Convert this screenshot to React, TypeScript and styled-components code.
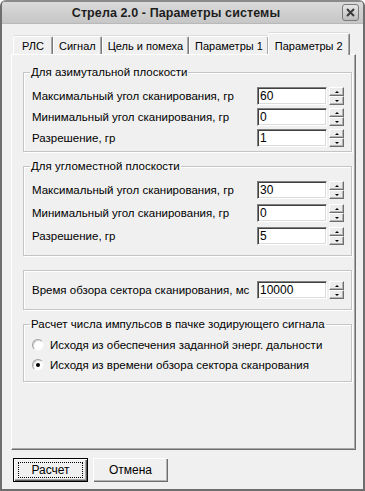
import React from 'react';
import styled, { createGlobalStyle } from 'styled-components';

const GlobalStyle = createGlobalStyle`
  html, body {
    margin: 0;
    padding: 0;
    background: #ffffff;
  }
  * {
    box-sizing: border-box;
  }
`;

// Window frame
const Window = styled.div`
  width: 365px;
  height: 491px;
  display: flex;
  flex-direction: column;
  background: #f0f0f0;
  border: 2px solid #6e6e6e;
  border-top: none;
  border-radius: 6px 6px 0 0;
  font-family: 'Liberation Sans', Arial, sans-serif;
  font-size: 11px;
  color: #000;
  overflow: hidden;
`;

const TitleBar = styled.div`
  height: 24px;
  display: flex;
  align-items: center;
  padding: 0 4px 0 6px;
  background: linear-gradient(#dadada, #c6c6c6);
  border-top: 2px solid #8a8a8a;
  border-bottom: 1px solid #b8b8b8;
`;

const Title = styled.div`
  flex: 1;
  text-align: center;
  font-size: 12.5px;
  font-weight: bold;
  color: #1e1e1e;
  letter-spacing: 0.1px;
  padding-left: 2px;
`;

const CloseButton = styled.div`
  width: 17px;
  height: 17px;
  border: 1px solid #7a7a7a;
  border-radius: 3px;
  background: linear-gradient(#e6e6e6, #bdbdbd);
  display: flex;
  align-items: center;
  justify-content: center;
`;

const Body = styled.div`
  flex: 1;
  display: flex;
  flex-direction: column;
  padding: 9px 7px 7px 9px;
`;

// Tabs
const TabStrip = styled.div`
  display: flex;
  align-items: flex-end;
  height: 22px;
  padding-left: 2px;
  position: relative;
  z-index: 1;
`;

const Tab = styled.div<{ $active?: boolean }>`
  height: ${({ $active }) => ($active ? '22px' : '18px')};
  min-width: 40px;
  padding: ${({ $active }) => ($active ? '2px 6px 0 6px' : '1px 5px 0 5px')};
  margin: ${({ $active }) => ($active ? '0 -2px 0 -1px' : '0 0 1px 0')};
  display: flex;
  align-items: center;
  justify-content: center;
  background: #f0f0f0;
  border-top: 1px solid #ffffff;
  border-left: 1px solid #ffffff;
  border-right: 1px solid #7a7a7a;
  box-shadow: inset -1px 0 #a8a8a8, 0 -1px 0 #dcdcdc;
  border-radius: 2px 2px 0 0;
  white-space: nowrap;
  position: relative;
  z-index: ${({ $active }) => ($active ? 2 : 1)};
  font-size: 11px;
`;

const Panel = styled.div`
  flex: 1;
  margin-top: -1px;
  display: flex;
  flex-direction: column;
  padding: 11px 3px 0 11px;
  background: #f0f0f0;
  border-top: 1px solid #ffffff;
  border-left: 1px solid #ffffff;
  border-right: 1px solid #6e6e6e;
  border-bottom: 1px solid #6e6e6e;
  box-shadow: inset -1px -1px #a8a8a8;
`;

// Group boxes
const Group = styled.fieldset<{ $gap: number; $pad: string; $top?: number }>`
  margin: ${({ $top }) => $top ?? 0}px 0 0 0;
  padding: ${({ $pad }) => $pad};
  border: 1px solid #c4c4c4;
  box-shadow: inset 1px 1px #ffffff, 1px 1px #ffffff;
  min-inline-size: 0;
  display: flex;
  flex-direction: column;
  gap: ${({ $gap }) => $gap}px;
`;

const Legend = styled.legend`
  padding: 0 1px;
  margin-left: -2px;
  line-height: 13px;
  font-size: 11.5px;
`;

const FieldRow = styled.div`
  display: grid;
  grid-template-columns: 1fr 70px 15px;
  column-gap: 2px;
  align-items: center;
  height: 18px;
`;

const FieldLabel = styled.span`
  font-size: 11.5px;
  white-space: nowrap;
`;

const NumberBox = styled.input`
  width: 70px;
  height: 18px;
  margin: 0;
  padding: 0 0 0 2px;
  font-family: 'Liberation Sans', Arial, sans-serif;
  font-size: 12px;
  color: #000;
  background: #ffffff;
  border-top: 1px solid #808080;
  border-left: 1px solid #808080;
  border-right: 1px solid #ffffff;
  border-bottom: 1px solid #ffffff;
  box-shadow: inset 1px 1px #404040, inset -1px -1px #dcdcdc;
  outline: none;
`;

const Spinner = styled.div`
  display: flex;
  flex-direction: column;
  height: 18px;
`;

const SpinButton = styled.div<{ $down?: boolean }>`
  height: 9px;
  display: flex;
  align-items: center;
  justify-content: center;
  background: #ececec;
  border-top: 1px solid #ffffff;
  border-left: 1px solid #ffffff;
  border-right: 1px solid #6e6e6e;
  border-bottom: 1px solid #6e6e6e;
  box-shadow: inset -1px -1px #b4b4b4;

  &::after {
    content: '';
    width: 0;
    height: 0;
    border-left: 2px solid transparent;
    border-right: 2px solid transparent;
    ${({ $down }) =>
      $down ? 'border-top: 2px solid #000;' : 'border-bottom: 2px solid #000;'}
  }
`;

const RadioRow = styled.label`
  display: flex;
  align-items: center;
  gap: 6px;
  height: 20px;
  font-size: 11.5px;
  white-space: nowrap;
`;

const RadioMark = styled.span<{ $checked?: boolean }>`
  width: 12px;
  height: 12px;
  border-radius: 50%;
  background: #ffffff;
  border: 1px solid;
  border-color: #a0a0a0 #f4f4f4 #f4f4f4 #a0a0a0;
  box-shadow: inset 1px 1px #d8d8d8;
  display: flex;
  align-items: center;
  justify-content: center;

  &::after {
    content: '';
    width: 4px;
    height: 4px;
    border-radius: 50%;
    background: ${({ $checked }) => ($checked ? '#000' : 'transparent')};
  }
`;

// Bottom buttons
const ButtonRow = styled.div`
  display: flex;
  gap: 5px;
  margin-top: 8px;
  padding-left: 2px;
`;

const PushButton = styled.button<{ $default?: boolean }>`
  width: 75px;
  height: 24px;
  margin: 0;
  padding: 0;
  font-family: 'Liberation Sans', Arial, sans-serif;
  font-size: 12px;
  color: #000;
  background: #f0f0f0;
  border: ${({ $default }) => ($default ? '1px solid #000' : 'none')};
  box-shadow: ${({ $default }) =>
    $default
      ? 'inset 1px 1px #ffffff, inset -1px -1px #5a5a5a, inset -2px -2px #a8a8a8'
      : 'inset 1px 1px #ffffff, inset -1px -1px #6e6e6e, inset -2px -2px #b4b4b4'};
  display: flex;
  align-items: center;
  justify-content: center;
  cursor: pointer;
`;

const FocusRing = styled.span`
  width: 65px;
  height: 16px;
  border: 1px dotted #000;
  display: flex;
  align-items: center;
  justify-content: center;
`;

type Field = { label: string; value: string };

const azimuth: Field[] = [
  { label: 'Максимальный угол сканирования, гр', value: '60' },
  { label: 'Минимальный угол сканирования, гр', value: '0' },
  { label: 'Разрешение, гр', value: '1' },
];

const elevation: Field[] = [
  { label: 'Максимальный угол сканирования, гр', value: '30' },
  { label: 'Минимальный угол сканирования, гр', value: '0' },
  { label: 'Разрешение, гр', value: '5' },
];

const tabs = ['РЛС', 'Сигнал', 'Цель и помеха', 'Параметры 1', 'Параметры 2'];

const SpinField: React.FC<Field> = ({ label, value }) => (
  <FieldRow>
    <FieldLabel>{label}</FieldLabel>
    <NumberBox value={value} readOnly />
    <Spinner>
      <SpinButton />
      <SpinButton $down />
    </Spinner>
  </FieldRow>
);

const App: React.FC = () => {
  return (
    <>
      <GlobalStyle />
      <Window>
        <TitleBar>
          <Title>Стрела 2.0 - Параметры системы</Title>
          <CloseButton>
            <svg width="9" height="9" viewBox="0 0 9 9">
              <path d="M1 1 L8 8 M8 1 L1 8" stroke="#3a3a3a" strokeWidth="2" />
            </svg>
          </CloseButton>
        </TitleBar>

        <Body>
          <TabStrip>
            {tabs.map((t, i) => (
              <Tab key={t} $active={i === tabs.length - 1}>
                {t}
              </Tab>
            ))}
          </TabStrip>

          <Panel>
            <Group $gap={3} $pad="8px 7px 4px 8px">
              <Legend>Для азимутальной плоскости</Legend>
              {azimuth.map((f, i) => (
                <SpinField key={i} {...f} />
              ))}
            </Group>

            <Group $gap={5} $pad="8px 7px 10px 8px" $top={8}>
              <Legend>Для угломестной плоскости</Legend>
              {elevation.map((f, i) => (
                <SpinField key={i} {...f} />
              ))}
            </Group>

            <Group $gap={0} $pad="10px 7px 10px 8px" $top={14}>
              <SpinField label="Время обзора сектора сканирования, мс" value="10000" />
            </Group>

            <Group $gap={0} $pad="4px 7px 6px 8px" $top={8}>
              <Legend>Расчет числа импульсов в пачке зодирующего сигнала</Legend>
              <RadioRow>
                <RadioMark />
                Исходя из обеспечения заданной энерг. дальности
              </RadioRow>
              <RadioRow>
                <RadioMark $checked />
                Исходя из времени обзора сектора сканрования
              </RadioRow>
            </Group>
          </Panel>

          <ButtonRow>
            <PushButton $default>
              <FocusRing>Расчет</FocusRing>
            </PushButton>
            <PushButton>Отмена</PushButton>
          </ButtonRow>
        </Body>
      </Window>
    </>
  );
};

export default App;
